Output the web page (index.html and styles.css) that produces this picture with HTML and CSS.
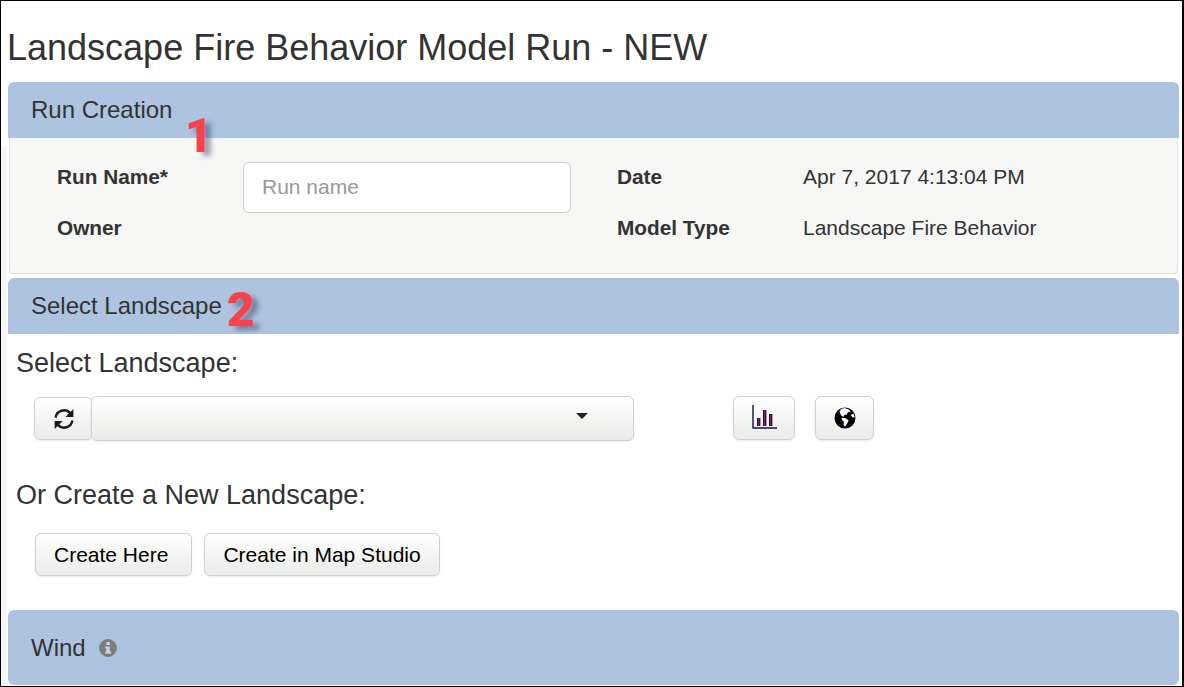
FILE: index.html
```html
<!DOCTYPE html>
<html lang="en">
<head>
    <meta charset="UTF-8">
    <title>Landscape Fire Behavior Model Run</title>
    <link rel="stylesheet" href="styles.css">
</head>
<body>
<div class="page">
    <h1>Landscape Fire Behavior Model Run - NEW</h1>

    <section class="panel">
        <div class="panel-head">Run Creation</div>
        <span class="marker marker-one">1</span>
        <div class="well">
            <div class="field-grid">
                <div class="label">Run Name*</div>
                <input class="name-input" type="text" placeholder="Run name">
                <div class="label">Date</div>
                <div class="value">Apr 7, 2017 4:13:04 PM</div>
                <div class="label">Owner</div>
                <div></div>
                <div class="label">Model Type</div>
                <div class="value">Landscape Fire Behavior</div>
            </div>
        </div>
    </section>

    <section class="panel panel-select">
        <div class="panel-head">Select Landscape</div>
        <span class="marker marker-two">2</span>
        <h3 class="sub-title">Select Landscape:</h3>
        <div class="select-row">
            <button class="btn btn-refresh" type="button" aria-label="Refresh">
                <svg width="22" height="22" viewBox="0 0 22 22" fill="none" stroke="#1c1c1c" stroke-width="2.4">
                    <path d="M2.6 9.6A8.4 8.4 0 0 1 17.2 5.2"/>
                    <path d="M19.4 12.4A8.4 8.4 0 0 1 4.8 16.8"/>
                    <path d="M20.4 1v8h-8z" fill="#1c1c1c" stroke="none"/>
                    <path d="M1.6 21v-8h8z" fill="#1c1c1c" stroke="none"/>
                </svg>
            </button>
            <div class="btn dropdown"><span class="caret"></span></div>
            <button class="btn btn-chart" type="button" aria-label="Chart">
                <svg class="chart-icon" width="25" height="24" viewBox="0 0 25 24">
                    <path d="M1 0v23h24" fill="none" stroke="#10105e" stroke-width="1.4"/>
                    <rect x="5" y="13" width="1.2" height="8" fill="#10105e"/>
                    <rect x="6.2" y="13" width="2.2" height="8" fill="#5a0a28"/>
                    <rect x="11" y="5" width="1.2" height="16" fill="#10105e"/>
                    <rect x="12.2" y="5" width="2.2" height="16" fill="#5a0a28"/>
                    <rect x="17" y="9" width="1.2" height="12" fill="#10105e"/>
                    <rect x="18.2" y="9" width="2.2" height="12" fill="#5a0a28"/>
                </svg>
            </button>
            <button class="btn btn-globe" type="button" aria-label="Map">
                <svg width="22" height="22" viewBox="0 0 22 22">
                    <circle cx="11" cy="11" r="10.5" fill="#000"/>
                    <path d="M7 2 10.5 1 15 2.6 16.6 4.4 13.6 5.6 13 7.6 10.4 8 9.2 10 6.8 8 5.6 4.6zM7.6 10.8 11.6 11.2 14.6 13.2 13.4 16.2 11 19.8 9.6 17.8 9.8 14.8 8 13zM16.6 8 19.6 6.6 20.8 10.4 18.4 10.2z" fill="#f2f6ff"/>
                </svg>
            </button>
        </div>
        <h3 class="sub-title sub-title-create">Or Create a New Landscape:</h3>
        <div class="create-row">
            <button class="btn btn-create btn-here" type="button">Create Here</button>
            <button class="btn btn-create" type="button">Create in Map Studio</button>
        </div>
    </section>

    <section class="panel-wind">
        Wind
        <svg class="info" width="18" height="18" viewBox="0 0 18 18">
            <circle cx="9" cy="9" r="9" fill="#7d7d7d"/>
            <rect x="7.4" y="3" width="3.4" height="3" fill="#c4d2e4"/>
            <path d="M6.2 7.4h4.6v5.2h1.4v2.2H6.2v-2.2h1.2v-3H6.2z" fill="#c4d2e4"/>
        </svg>
    </section>
</div>
</body>
</html>
```

FILE: styles.css
```css
* {
    margin: 0;
    padding: 0;
    box-sizing: border-box;
}

html, body {
    height: 100%;
    overflow: hidden;
}

body {
    font-family: "Liberation Sans", Arial, sans-serif;
    color: #333333;
    background-color: #ffffff;
}

/* The black line round the screenshot, and the faint gutter on the left */
.page {
    height: 687px;
    border: 1px solid #000000;
    border-right-width: 2px;
    padding: 27px 3px 0 7px;
    background: linear-gradient(to right, #f6f6f6 0, #f6f6f6 6px, #ffffff 6px) no-repeat 0 146px;
}

h1 {
    font-size: 36px;
    font-weight: normal;
    line-height: 40px;
    margin: 0 0 14px -1px;
}

/* Panels */
.panel {
    position: relative;
}

.panel-head {
    height: 56px;
    padding: 14px 23px 0;
    font-size: 24px;
    line-height: 28px;
    background-color: #adc3e0;
    border-radius: 6px 6px 0 0;
}

.well {
    height: 136px;
    margin: 0 1px;
    padding: 24px 47px 0;
    background-color: #f6f6f5;
    border: 1px solid #dde3dc;
    border-top: 0;
    border-radius: 0 0 4px 4px;
}

.field-grid {
    display: grid;
    grid-template-columns: 186px 374px 186px 1fr;
    grid-template-rows: 51px 30px;
    font-size: 21px;
    line-height: 30px;
}

.label {
    font-size: 20.8px;
    font-weight: bold;
}

.name-input {
    width: 328px;
    height: 51px;
    padding: 0 18px 2px;
    font-family: inherit;
    font-size: 21px;
    color: #555555;
    background-color: #ffffff;
    border: 1px solid #c8d0c8;
    border-radius: 6px;
}

.name-input::placeholder {
    color: #999999;
}

.panel-select {
    margin-top: 4px;
}

.sub-title {
    font-size: 27px;
    font-weight: normal;
    line-height: 30px;
    margin: 14px 0 18px 8px;
}

.sub-title-create {
    margin: 39px 0 23px 8px;
}

/* Buttons */
.btn {
    display: flex;
    align-items: center;
    justify-content: center;
    font-family: inherit;
    font-size: 21px;
    color: #000000;
    background: linear-gradient(to bottom, #ffffff 0, #e9ece8 100%);
    border: 1px solid #d0d0d0;
    border-radius: 6px;
    box-shadow: 0 1px 2px rgba(0, 0, 0, 0.08);
}

.select-row {
    display: flex;
    align-items: flex-start;
    height: 45px;
    padding-left: 26px;
}

.btn-refresh {
    width: 59px;
    height: 43px;
    margin-top: 1px;
}

.dropdown {
    position: relative;
    width: 543px;
    height: 45px;
    margin-left: -2px;
}

.caret {
    position: absolute;
    top: 16px;
    right: 45px;
    border-top: 6px solid #222222;
    border-left: 6px solid transparent;
    border-right: 6px solid transparent;
}

.btn-chart {
    width: 62px;
    height: 44px;
    margin-left: 99px;
}

.chart-icon {
    margin-bottom: 3px;
}

.btn-globe {
    width: 59px;
    height: 44px;
    margin-left: 20px;
}

.create-row {
    display: flex;
    gap: 12px;
    padding-left: 27px;
}

.btn-create {
    height: 43px;
    padding: 0 18px;
}

.btn-here {
    padding: 0 23px 0 18px;
}

/* Wind panel is only a header */
.panel-wind {
    display: flex;
    align-items: center;
    gap: 13px;
    height: 75px;
    margin-top: 34px;
    padding: 0 23px;
    font-size: 24px;
    background-color: #adc3e0;
    border-radius: 6px;
}

/* Red numbers added on top of the screenshot */
.marker {
    position: absolute;
    font-family: Roboto, "Liberation Sans", sans-serif;
    font-size: 48px;
    font-weight: 900;
    line-height: 50px;
    color: #f7424e;
    text-shadow: 6px 4px 5px rgba(40, 50, 80, 0.45);
}

.marker-one {
    top: 29px;
    left: 177px;
}

.marker-two {
    top: 7px;
    left: 219px;
}
```
